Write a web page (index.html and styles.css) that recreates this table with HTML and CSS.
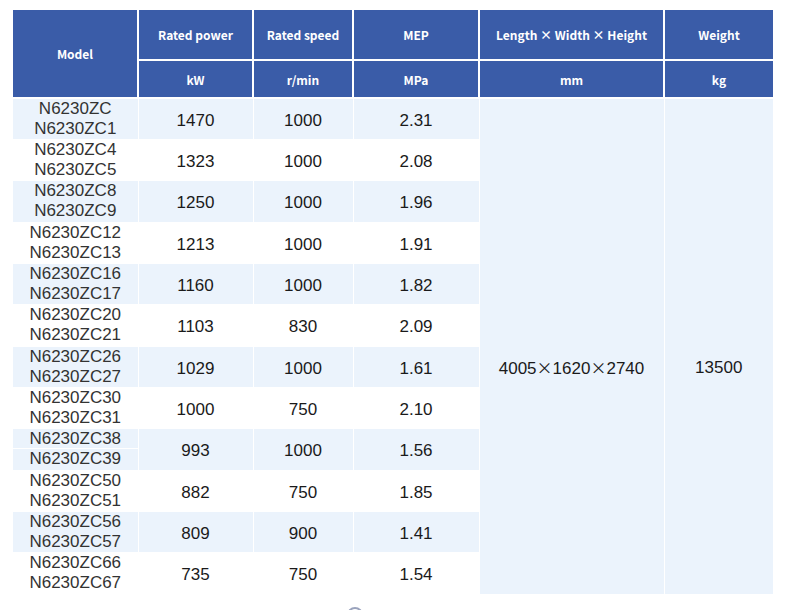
FILE: index.html
```html
<!DOCTYPE html>
<html>
<head>
<meta charset="utf-8">
<link rel="stylesheet" href="styles.css">
</head>
<body>
<table class="spec">
  <colgroup>
    <col class="c-model"><col class="c-power"><col class="c-speed"><col class="c-mep"><col class="c-dim"><col class="c-weight">
  </colgroup>
  <thead>
    <tr class="h1">
      <th rowspan="2">Model</th>
      <th>Rated power</th>
      <th>Rated speed</th>
      <th>MEP</th>
      <th>Length × Width × Height</th>
      <th>Weight</th>
    </tr>
    <tr class="h2">
      <th>kW</th>
      <th>r/min</th>
      <th>MPa</th>
      <th>mm</th>
      <th>kg</th>
    </tr>
  </thead>
  <tbody>
    <tr class="alt">
      <td class="model">N6230ZC<br>N6230ZC1</td><td>1470</td><td>1000</td><td>2.31</td>
      <td class="merged" rowspan="12">4005<span class="x">×</span>1620<span class="x">×</span>2740</td>
      <td class="merged" rowspan="12">13500</td>
    </tr>
    <tr><td class="model">N6230ZC4<br>N6230ZC5</td><td>1323</td><td>1000</td><td>2.08</td></tr>
    <tr class="alt"><td class="model">N6230ZC8<br>N6230ZC9</td><td>1250</td><td>1000</td><td>1.96</td></tr>
    <tr><td class="model">N6230ZC12<br>N6230ZC13</td><td>1213</td><td>1000</td><td>1.91</td></tr>
    <tr class="alt"><td class="model">N6230ZC16<br>N6230ZC17</td><td>1160</td><td>1000</td><td>1.82</td></tr>
    <tr><td class="model">N6230ZC20<br>N6230ZC21</td><td>1103</td><td>830</td><td>2.09</td></tr>
    <tr class="alt"><td class="model">N6230ZC26<br>N6230ZC27</td><td>1029</td><td>1000</td><td>1.61</td></tr>
    <tr><td class="model">N6230ZC30<br>N6230ZC31</td><td>1000</td><td>750</td><td>2.10</td></tr>
    <tr class="alt"><td class="model split"><span class="top">N6230ZC38</span><span>N6230ZC39</span></td><td>993</td><td>1000</td><td>1.56</td></tr>
    <tr><td class="model">N6230ZC50<br>N6230ZC51</td><td>882</td><td>750</td><td>1.85</td></tr>
    <tr class="alt"><td class="model">N6230ZC56<br>N6230ZC57</td><td>809</td><td>900</td><td>1.41</td></tr>
    <tr><td class="model">N6230ZC66<br>N6230ZC67</td><td>735</td><td>750</td><td>1.54</td></tr>
  </tbody>
</table>
<div class="dot"></div>
</body>
</html>
```
FILE: styles.css
```css
html, body {
  margin: 0;
  padding: 0;
  background: #ffffff;
  overflow: hidden;
}
body {
  font-family: "Noto Sans CJK SC", "Noto Sans", sans-serif;
  height: 610px;
}
.spec {
  border-collapse: collapse;
  table-layout: fixed;
  width: 760px;
  margin: 10px 0 0 13px;
}
.c-model { width: 125px; }
.c-power { width: 115px; }
.c-speed { width: 100px; }
.c-mep { width: 126px; }
.c-dim { width: 185px; }
.c-weight { width: 109px; }

.spec th {
  background: #3a5ca8;
  color: #ffffff;
  font-size: 12px;
  font-weight: 700;
  border: 2px solid #ffffff;
  padding: 0;
  text-align: center;
}
.spec thead tr:first-child th { border-top: 0; }
.spec th:first-child { border-left: 0; }
.spec th:last-child { border-right: 0; }
.h1 { height: 50px; }
.h2 { height: 38px; }

.spec tbody tr { height: 41.33px; }
.spec td {
  font-family: "Liberation Sans", Arial, sans-serif;
  font-size: 17px;
  line-height: 20px;
  color: #1a1a1a;
  text-align: center;
  padding: 4px 0 0;
  border: 1px solid #ffffff;
}
.spec td:first-child { border-left: 0; }
.spec tr.alt td { background: #ebf3fc; }
.spec td.merged {
  background: #ebf3fc;
  border-right: 0;
  padding-top: 44px;
}
.spec td.model {
  color: #333333;
  padding-top: 0;
}
.x {
  font-family: "Noto Sans CJK SC", sans-serif;
  font-size: 16px;
}
.split span {
  display: block;
}
.split .top {
  border-bottom: 1px solid #ffffff;
  line-height: 19px;
}
.dot {
  width: 16px;
  height: 16px;
  border-radius: 50%;
  border: 2px solid #9aa3bd;
  box-sizing: border-box;
  margin: 12px 0 0 347px;
}
```
